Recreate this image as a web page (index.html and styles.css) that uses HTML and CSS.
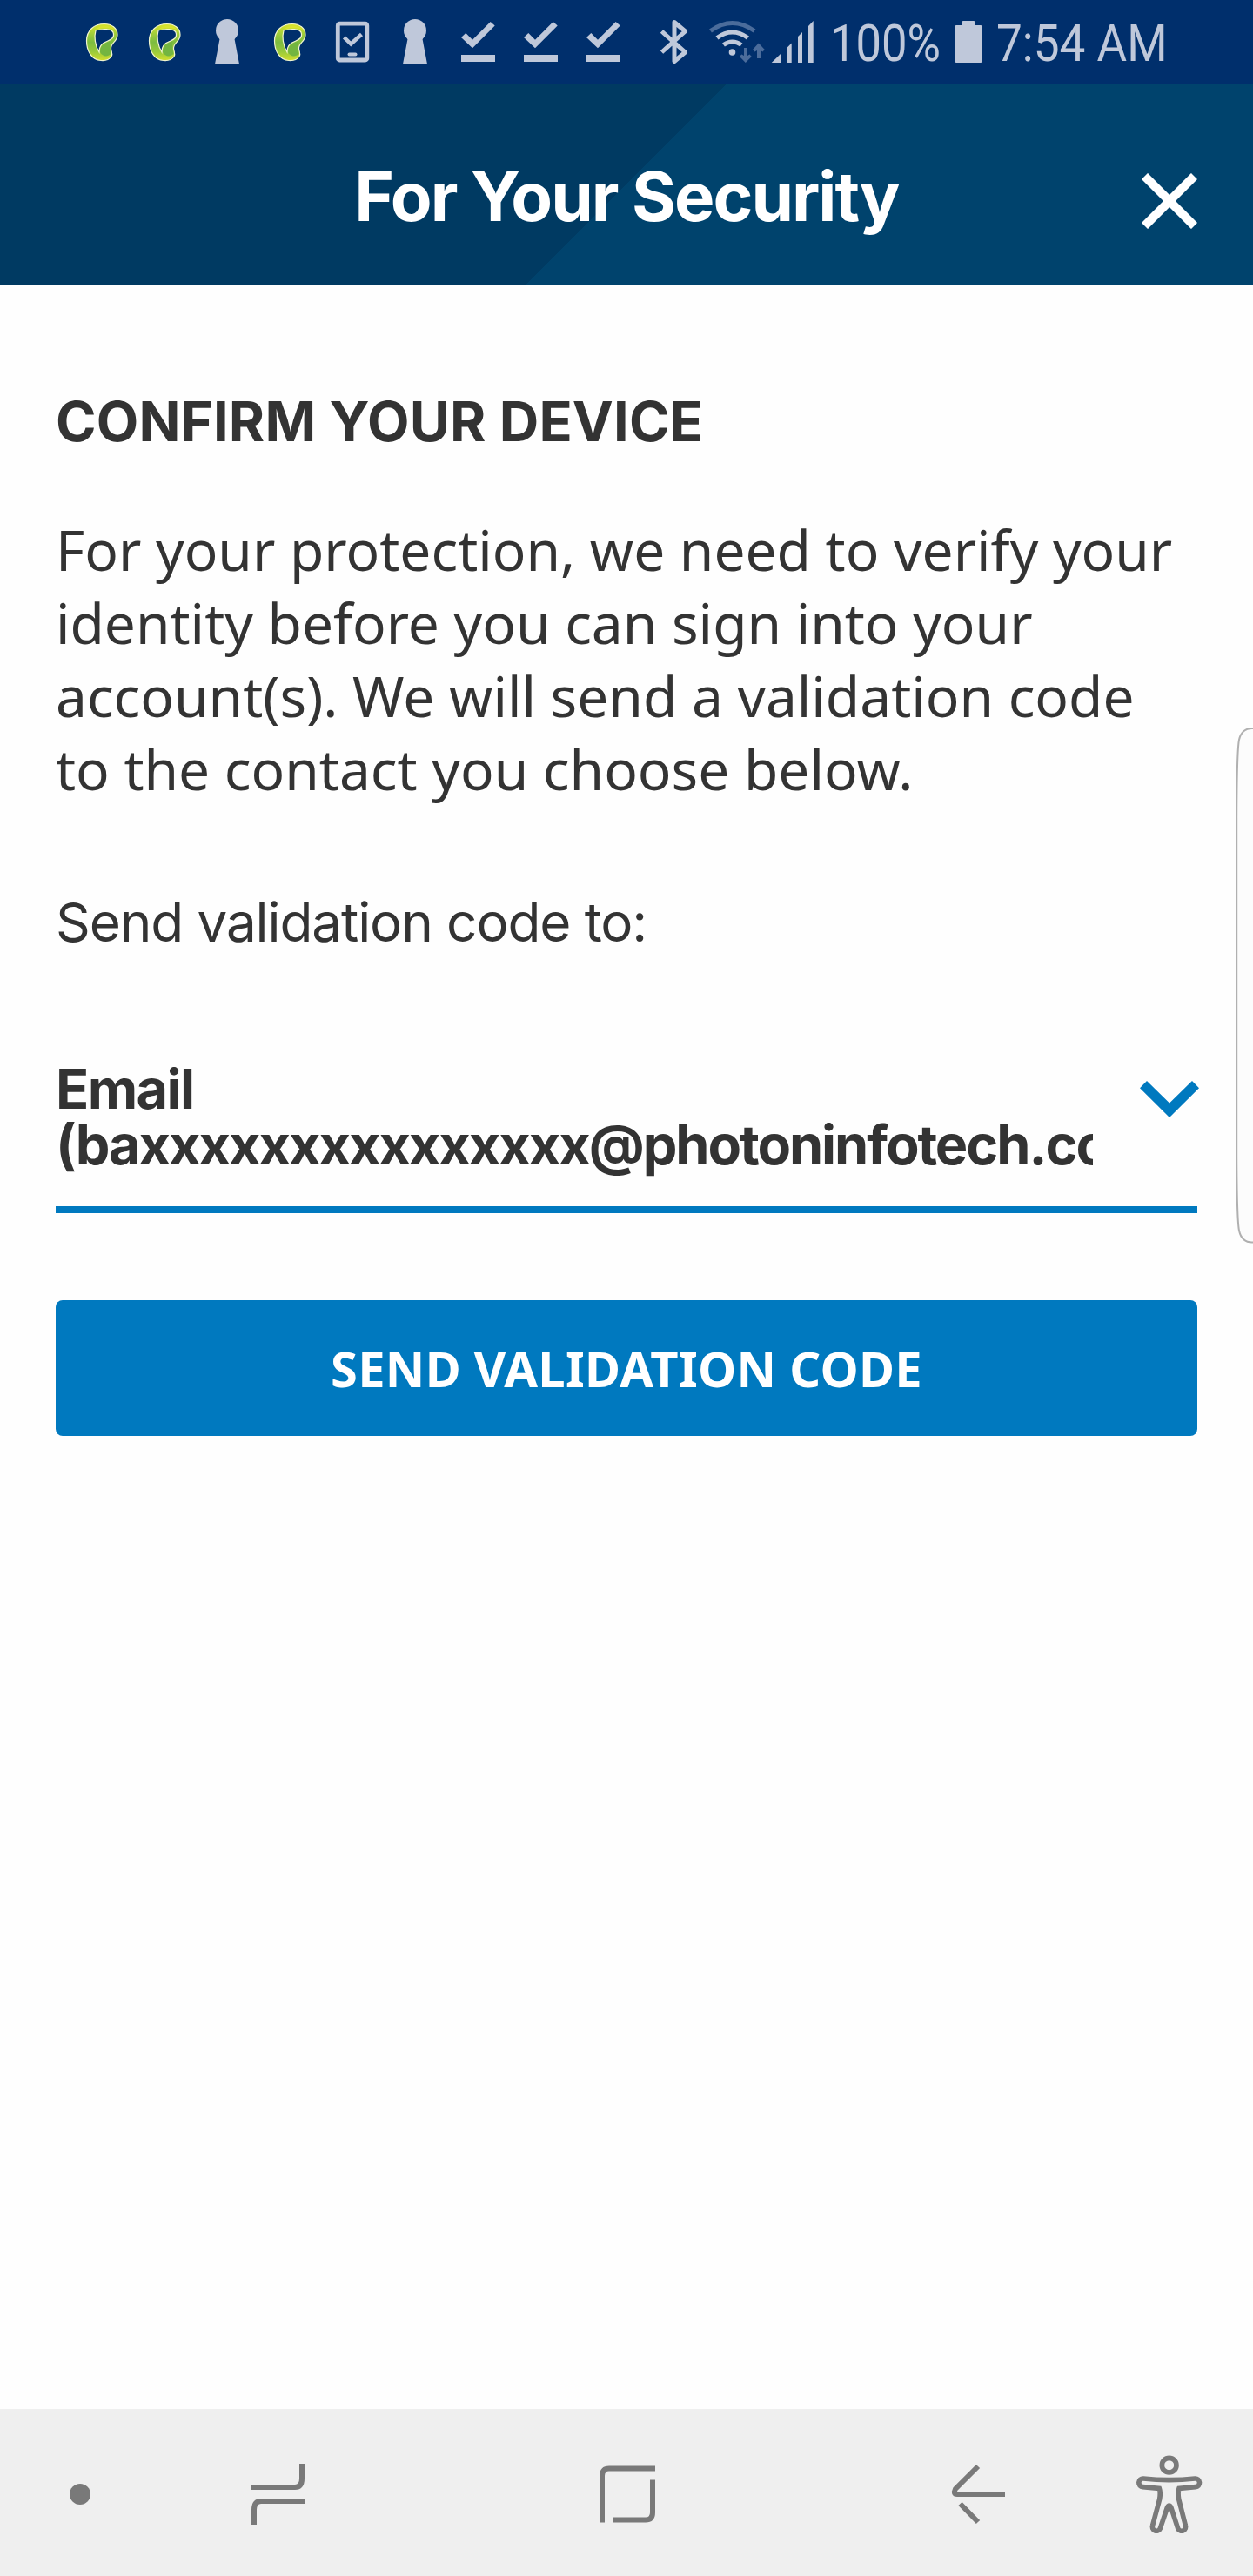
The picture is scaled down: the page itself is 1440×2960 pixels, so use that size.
FILE: index.html
```html
<!DOCTYPE html>
<html lang="en">
<head>
<meta charset="utf-8">
<title>For Your Security</title>
<link rel="stylesheet" href="styles.css">
</head>
<body>
<svg class="defs" aria-hidden="true">
  <defs>
    <linearGradient id="leaf" x1="0" y1="0" x2="0" y2="1">
      <stop offset="0" stop-color="#dde52c"/><stop offset=".25" stop-color="#a5d03a"/><stop offset=".5" stop-color="#7dbc40"/><stop offset=".75" stop-color="#98c93b"/><stop offset="1" stop-color="#d2de2e"/>
    </linearGradient>
    <symbol id="i-swirl" viewBox="0 0 72 96">
      <path fill="url(#leaf)" fill-rule="evenodd" stroke="#f1f5cf" stroke-width="1.2" d="M39 27.500C47 27.500 54 32 54 40C54 48 46 49 46.500 56C47 60 49 62 47 65C44 69 40 70 35 69.500C24 69 18.500 58 18.500 47C18.500 35 27 27.500 39 27.500ZM29 35C27 42 28 52 33 60C33 51 38 49 43 47C48 45 50 42 49.500 39C49 32 36 33 29 35Z"/>
      <path fill="#73b540" d="M34 60C34 52 39 50 45.500 48C44 53 46 57 46.500 62C42 66 37 65 34 60Z"/>
      <path fill="#d9e32e" d="M29 34C33 29 45 28 51 34C46 32 35 31.500 29 34Z"/>
    </symbol>
    <symbol id="i-keyhole" viewBox="0 0 72 96">
      <circle cx="36" cy="35" r="13"/><path d="M28 42H44L50 73.700H22Z"/>
    </symbol>
    <symbol id="i-check" viewBox="0 0 72 96">
      <path d="M17 43L22.300 38L30 45.700L50.700 25L55.700 29.500L30 55.300ZM17 63H56V71H17Z"/>
    </symbol>
  </defs>
</svg>

<div class="screen">
  <div class="status">
    <svg class="slot"><use href="#i-swirl"/></svg>
    <svg class="slot"><use href="#i-swirl"/></svg>
    <svg class="slot"><use href="#i-keyhole"/></svg>
    <svg class="slot"><use href="#i-swirl"/></svg>
    <svg class="slot" viewBox="0 0 72 96">
      <g fill="none" stroke="#bfc8da"><rect x="19.300" y="27.200" width="33.500" height="41.800" rx="2" stroke-width="4.800"/><path stroke-width="4.500" d="M26.500 43L34.300 50.500L46.500 39.500"/></g>
      <rect x="30.500" y="60.500" width="11" height="4" rx="2"/>
    </svg>
    <svg class="slot"><use href="#i-keyhole"/></svg>
    <svg class="slot"><use href="#i-check"/></svg>
    <svg class="slot"><use href="#i-check"/></svg>
    <svg class="slot"><use href="#i-check"/></svg>
    <svg class="bluetooth" viewBox="729 0 81 96"><path fill="none" stroke="#bfc8da" stroke-width="5" stroke-linejoin="round" d="M760.500 36L787.500 60L775 70.500V25.500L787.500 36L760.500 60"/></svg>
    <svg class="wifi" viewBox="810 0 72 96">
      <g fill="none" stroke-width="5"><path stroke="#4b6c9b" d="M816.500 35.500Q841.500 17.500 867 35.500"/><path stroke="#bfc8da" d="M824 43.500Q841.500 30.500 859.500 43.500M831.500 51.500Q841.500 44.500 852 51.500"/></g>
      <circle cx="841.500" cy="60" r="3.800"/>
      <path fill="#4b6c9b" d="M855 55h4v9l2.500-1.500 2.300 2.500-7 7-6.800-7 2.300-2.500 2.700 1.500zM870 67h4v-9l2.500 1.500 2.300-2.500-7-7.500-6.800 7.500 2.300 2.500 2.700-1.500z"/>
    </svg>
    <svg class="signal" viewBox="882 0 60 96"><path d="M886.700 72L897 62V72ZM904.300 72V55L909.700 49.500V72ZM917 72V42L922 37V72ZM929 72V30L934.700 24V72Z"/></svg>
    <span class="percent"><span>100%</span></span>
    <svg class="battery" viewBox="1091 0 48 96"><path d="M1099 29H1105V26Q1105 24 1107 24H1119Q1121 24 1121 26V29H1127Q1129 29 1129 31V70Q1129 72 1127 72H1099Q1097 72 1097 70V31Q1097 29 1099 29Z"/></svg>
    <span class="clock"><span>7:54 AM</span></span>
  </div>

  <header class="header">
    <h1>For Your Security</h1>
    <svg class="close" viewBox="0 0 64 64"><path fill="none" stroke="#fff" stroke-width="10" d="M3.500 3.500L60.500 60.500M60.500 3.500L3.500 60.500"/></svg>
  </header>

  <main class="content">
    <h2>CONFIRM YOUR DEVICE</h2>
    <p class="intro">For your protection, we need to verify your<br>identity before you can sign into your<br>account(s). We will send a validation code<br>to the contact you choose below.</p>
    <p class="label">Send validation code to:</p>
    <div class="select">
      <div class="value">
        <div class="kind">Email</div>
        <div class="address">(baxxxxxxxxxxxxxxx@photoninfotech.com)</div>
      </div>
      <svg class="chevron" viewBox="0 0 68 42"><path d="M0 8.200L8 0L34 25.500L60 0L68 8.200L34 42Z"/></svg>
    </div>
    <button class="send">SEND VALIDATION CODE</button>
  </main>

  <nav class="nav">
    <svg width="184" height="192" viewBox="0 2768 184 192"><circle cx="92" cy="2866" r="12" fill="#797979"/></svg>
    <svg width="272" height="192" viewBox="184 2768 272 192"><path d="M289 2858H339Q347 2858 347 2848V2831M350 2874H300Q292 2874 292 2884V2901"/></svg>
    <svg width="528" height="192" viewBox="456 2768 528 192"><path d="M753 2836.500H700Q692 2836.500 692 2845V2898.500M750 2849.500V2887Q750 2895.500 742 2895.500H705"/></svg>
    <svg width="284" height="192" viewBox="984 2768 284 192"><path d="M1124 2834L1098 2860Q1095 2866 1100 2866H1155M1103.500 2877L1124 2898"/></svg>
    <svg width="172" height="192" viewBox="684 54 516 576"><g stroke-width="17"><circle cx="911" cy="248" r="25"/><path d="M822 294Q911 304 1000 294A14.500 14.500 0 0 1 1002 323L945 328Q940 342 944 365L967 455A13.500 13.500 0 0 1 941 466L918 395Q911 380 904 395L880 466A13.500 13.500 0 0 1 854 455L878 365Q882 342 877 328L820 323A14.500 14.500 0 0 1 822 294Z"/></g></svg>
  </nav>

  <svg class="edge-handle" viewBox="1416 832 24 600"><path d="M1444 837H1439Q1427 837 1424 850Q1421.500 862 1421.200 940V1325Q1421.500 1402 1424 1414Q1427 1427.500 1439 1427.500H1444"/></svg>
</div>
</body>
</html>
```
FILE: styles.css
```css
* { box-sizing: border-box; }
body { margin: 0; background: #fefefe; }
h1, h2, p { margin: 0; }
svg { display: block; flex: none; }
.defs { position: absolute; width: 0; height: 0; }

.screen {
  position: relative;
  display: flex;
  flex-direction: column;
  width: 1440px;
  height: 2960px;
  overflow: hidden;
  background: #fefefe;
  color: #333;
  font-family: Inter, "Liberation Sans", sans-serif;
}

.status {
  display: flex;
  height: 96px;
  padding-left: 81px;
  background: #002f6c;
  color: #bfc8da;
  fill: #bfc8da;
  font: 60px/96px Roboto, sans-serif;
  white-space: nowrap;
}
.slot, .wifi { width: 72px; height: 96px; }
.bluetooth { width: 81px; height: 96px; }
.signal { width: 60px; height: 96px; }
.battery { width: 48px; height: 96px; }
.percent { width: 149px; padding: 2px 0 0 12px; }
.clock { padding: 2px 0 0 6px; }
.percent span, .clock span {
  display: inline-block;
  transform: scaleX(.875);
  transform-origin: left;
}
.clock span { transform: scaleX(.885); }

.header {
  position: relative;
  height: 232px;
  padding-top: 83px;
  background: linear-gradient(135deg, #003a62 50%, #00436d 50%) -116px 0 / 1671px 232px;
  color: #fff;
  text-align: center;
}
.header h1 { font-size: 78px; line-height: 94px; font-weight: 700; letter-spacing: -2px; }
.close { position: absolute; top: 103px; right: 64px; width: 64px; height: 64px; }

.content { flex: 1; padding: 118px 64px 0; }
.content h2 { font-size: 63px; line-height: 76px; font-weight: 700; letter-spacing: 0.2px; white-space: nowrap; }
.intro { margin-top: 68px; font: 64px/84px "Noto Sans", sans-serif; white-space: nowrap; }
.label { margin-top: 96px; font-size: 62px; line-height: 76px; letter-spacing: -1.1px; }
.select {
  display: flex;
  justify-content: space-between;
  margin-top: 121px;
  padding-bottom: 39px;
  border-bottom: 8px solid #0079bf;
}
.value {
  width: 1192px;
  overflow-x: clip;
  font-size: 63px;
  line-height: 64px;
  font-weight: 700;
  white-space: nowrap;
}
.kind { letter-spacing: -1.6px; }
.address { letter-spacing: -2.07px; }
.chevron { width: 68px; height: 42px; margin: 23px -2px 0 0; fill: #0079bf; }
.send {
  display: block;
  width: 100%;
  height: 156px;
  margin-top: 100px;
  padding: 0 0 1px;
  border: 0;
  border-radius: 8px;
  background: #0079bf;
  color: #fff;
  font: 700 56px/76px "Noto Sans", sans-serif;
  letter-spacing: 0.3px;
}

.nav { display: flex; height: 192px; background: #efefef; }
.nav svg { fill: none; stroke: #797979; stroke-width: 6; }
.nav svg:first-child { stroke: none; }

.edge-handle {
  position: absolute;
  top: 832px;
  right: 0;
  width: 24px;
  height: 600px;
  fill: #fcfcfc;
  stroke: #b0b0b0;
  stroke-width: 2;
}
```
